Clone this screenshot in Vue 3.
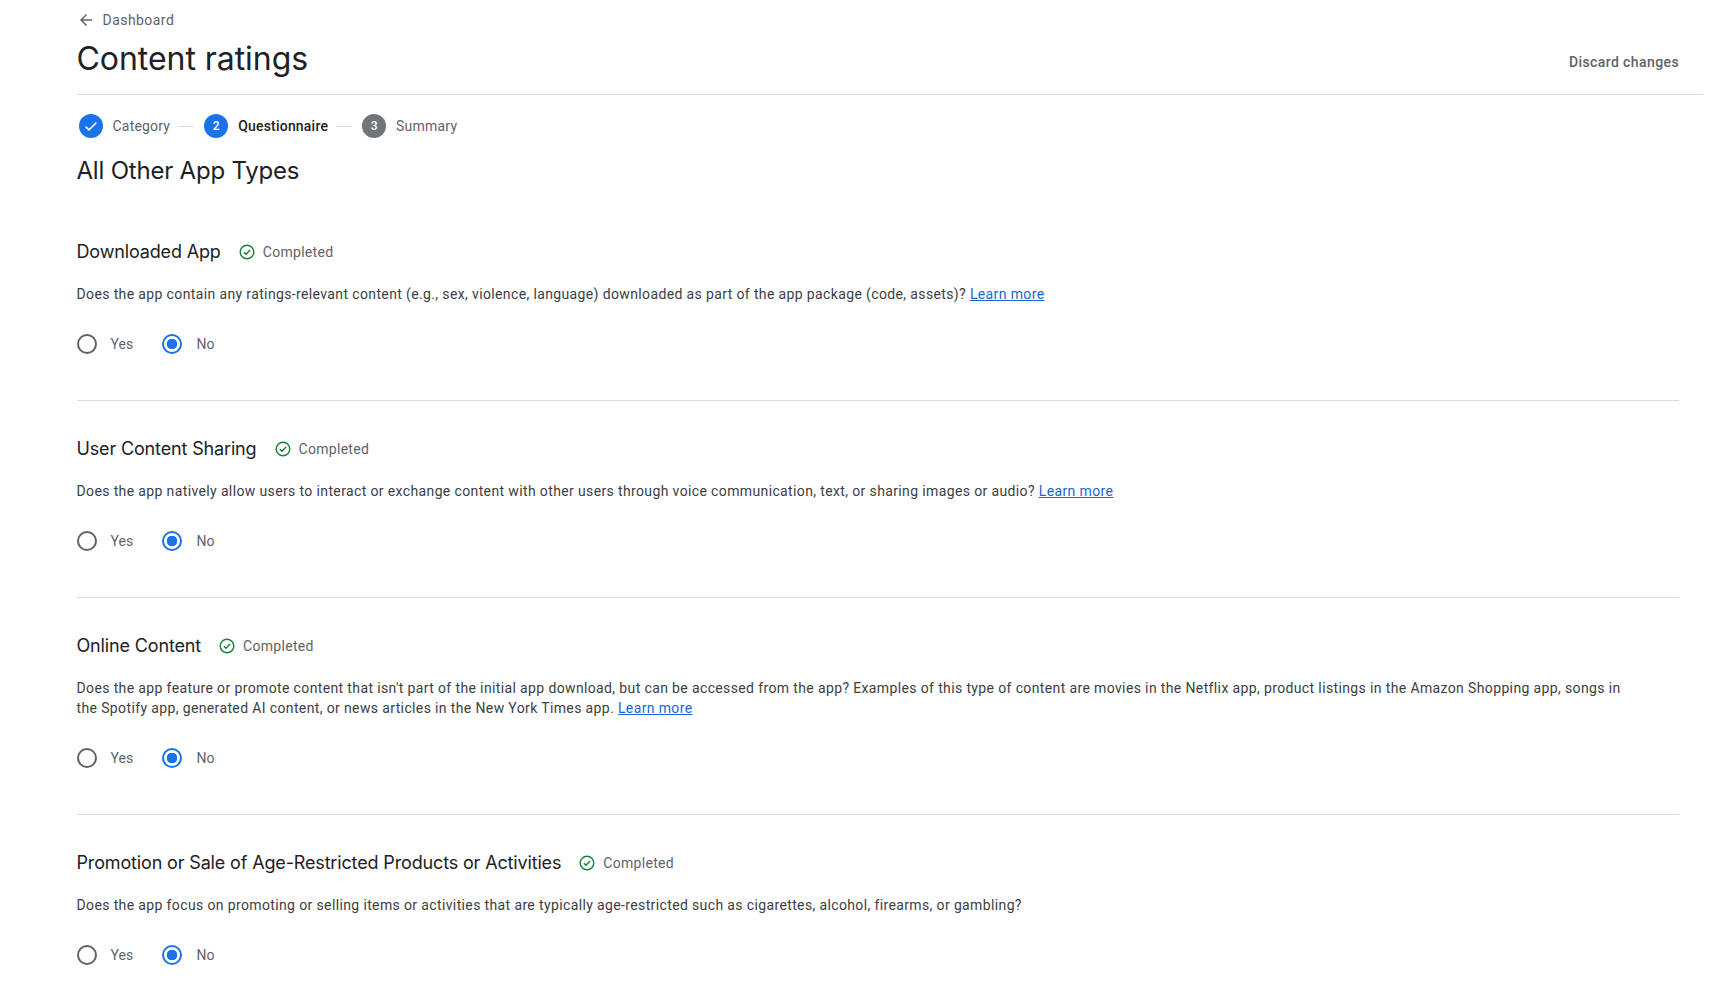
<template>
  <div class="page">
    <a class="back">
      <svg class="back-icon" width="18" height="18" viewBox="0 0 24 24"><path d="M20 11H7.8l5.6-5.6L12 4l-8 8 8 8 1.4-1.4L7.8 13H20z" /></svg>
      Dashboard
    </a>
    <header class="head">
      <h1>Content ratings</h1>
      <a class="discard">Discard changes</a>
    </header>
    <div class="body">
      <div class="stepper">
        <template v-for="(step, i) in steps" :key="step.label">
          <span v-if="i > 0" class="step-line"></span>
          <span class="step-dot" :class="step.state">
            <svg v-if="step.state === 'done'" width="16" height="16" viewBox="0 0 24 24"><path d="M9 16.2 4.8 12l-1.7 1.7L9 19.6 21 7.6l-1.7-1.7z" fill="#fff" /></svg>
            <template v-else>{{ i + 1 }}</template>
          </span>
          <span class="step-label" :class="step.state">{{ step.label }}</span>
        </template>
      </div>
      <h2>All Other App Types</h2>
      <section v-for="q in questions" :key="q.title" class="question">
        <div class="q-head">
          <h3>{{ q.title }}</h3>
          <svg class="check" width="18" height="18" viewBox="0 0 18 18" fill="none" stroke="#188038" stroke-width="1.4"><circle cx="9" cy="9" r="6.8" /><path d="M5.9 9.2 8 11.3l4.1-4.2" /></svg>
          <span class="status">Completed</span>
        </div>
        <p class="desc">{{ q.text }} <a v-if="q.link" class="learn">Learn more</a></p>
        <div class="radios">
          <label class="radio"><span class="circle"></span>Yes</label>
          <label class="radio"><span class="circle on"></span>No</label>
        </div>
      </section>
    </div>
  </div>
</template>

<script setup>
const steps = [
  { label: "Category", state: "done" },
  { label: "Questionnaire", state: "active" },
  { label: "Summary", state: "todo" },
];

const questions = [
  {
    title: "Downloaded App",
    text: "Does the app contain any ratings-relevant content (e.g., sex, violence, language) downloaded as part of the app package (code, assets)?",
    link: true,
  },
  {
    title: "User Content Sharing",
    text: "Does the app natively allow users to interact or exchange content with other users through voice communication, text, or sharing images or audio?",
    link: true,
  },
  {
    title: "Online Content",
    text: "Does the app feature or promote content that isn't part of the initial app download, but can be accessed from the app? Examples of this type of content are movies in the Netflix app, product listings in the Amazon Shopping app, songs in the Spotify app, generated AI content, or news articles in the New York Times app.",
    link: true,
  },
  {
    title: "Promotion or Sale of Age-Restricted Products or Activities",
    text: "Does the app focus on promoting or selling items or activities that are typically age-restricted such as cigarettes, alcohol, firearms, or gambling?",
    link: false,
  },
];
</script>

<style>
html,
body {
  background: #fff;
}
</style>

<style scoped>
.page {
  padding: 10px 33px 0 76.5px;
  font-family: Roboto, "Liberation Sans", sans-serif;
  color: #3c4043;
  height: 1007px;
  box-sizing: border-box;
  overflow: hidden;
}
.back {
  display: flex;
  align-items: center;
  gap: 8px;
  height: 20px;
  font-size: 14px;
  color: #5f6368;
  letter-spacing: 0.45px;
}
.back-icon {
  fill: #5f6368;
}
.head {
  display: flex;
  justify-content: space-between;
  align-items: flex-end;
  height: 64px;
  border-bottom: 1px solid #dadce0;
}
h1 {
  margin: 0 0 15px;
  font-family: Inter, sans-serif;
  font-weight: 400;
  font-size: 32px;
  letter-spacing: -0.05px;
  line-height: 40px;
  color: #202124;
}
.discard {
  margin: 0 24px 22px 0;
  font-size: 14px;
  font-weight: 500;
  line-height: 20px;
  letter-spacing: 0.4px;
  color: #5f6368;
}
.body {
  padding-right: 24px;
}
.stepper {
  display: flex;
  align-items: center;
  height: 24px;
  margin-top: 19px;
  padding-left: 2px;
  font-size: 14px;
}
.step-dot {
  width: 24px;
  height: 24px;
  border-radius: 50%;
  display: flex;
  align-items: center;
  justify-content: center;
  background: #1a73e8;
  color: #fff;
  font-size: 12px;
  font-weight: 500;
}
.step-dot.todo {
  background: #70757a;
}
.step-label {
  margin-left: 10px;
  color: #5f6368;
  letter-spacing: 0.2px;
}
.step-label.active {
  color: #202124;
  font-weight: 500;
  letter-spacing: 0.2px;
}
.step-line {
  width: 16px;
  height: 1px;
  background: #dadce0;
  margin: 0 10px 0 8px;
}
h2 {
  margin: 17px 0 0;
  font-family: Inter, sans-serif;
  font-weight: 400;
  font-size: 24px;
  letter-spacing: -0.2px;
  line-height: 32px;
  color: #202124;
}
.question {
  padding: 36px 0 46px;
  border-bottom: 1px solid #dadce0;
}
.question:first-of-type {
  padding-top: 53px;
}
.question:last-child {
  border-bottom: none;
}
.q-head {
  display: flex;
  align-items: center;
  height: 24px;
}
h3 {
  margin: 0 17px 0 0;
  font-family: Inter, sans-serif;
  font-weight: 400;
  font-size: 18px;
  letter-spacing: -0.15px;
  line-height: 24px;
  color: #202124;
}
.check {
  flex: none;
}
.status {
  margin-left: 7px;
  font-size: 14px;
  color: #5f6368;
  letter-spacing: 0.3px;
}
.desc {
  margin: 20px 0 0;
  font-size: 14px;
  line-height: 20px;
  letter-spacing: 0.37px;
  max-width: 1560px;
}
.learn {
  color: #1967d2;
  text-decoration: underline;
}
.radios {
  display: flex;
  gap: 29px;
  margin-top: 30px;
}
.radio {
  display: flex;
  align-items: center;
  gap: 14px;
  height: 20px;
  font-size: 14px;
  letter-spacing: 0.1px;
  color: #5f6368;
}
.circle {
  width: 20px;
  height: 20px;
  box-sizing: border-box;
  border: 2px solid #5f6368;
  border-radius: 50%;
}
.circle.on {
  border-color: #1a73e8;
  background: radial-gradient(circle, #1a73e8 5px, transparent 5.5px);
}
</style>
